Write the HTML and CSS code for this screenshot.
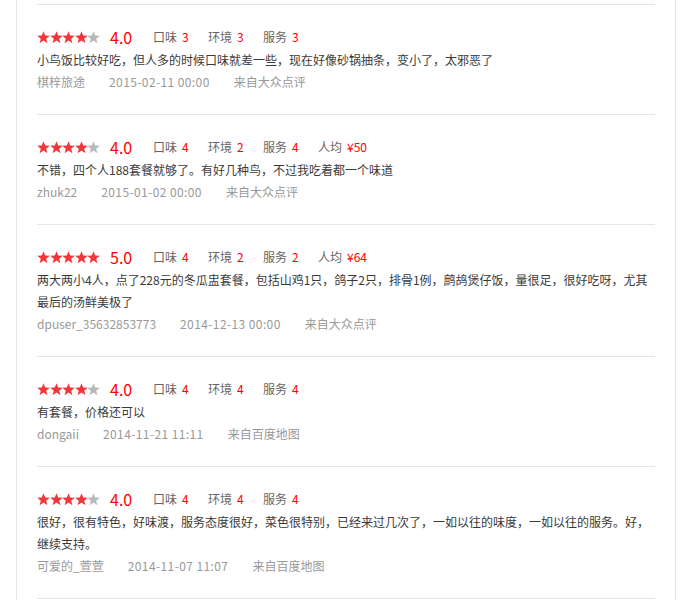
FILE: index.html
```html
<!DOCTYPE html>
<html lang="zh-CN">
<head>
  <meta charset="UTF-8" />
  <title>评论列表</title>
  <link rel="stylesheet" href="styles.css">
</head>
<body>
  <svg width="0" height="0" style="position:absolute">
    <defs>
      <polygon id="star" points="6.5,0.3 8.2,4.6 12.8,4.8 9.2,7.7 10.4,12.2 6.5,9.6 2.6,12.2 3.8,7.7 0.2,4.8 4.8,4.6" />
    </defs>
  </svg>

  <div class="panel">
    <ul class="reviews">
      <li class="review">
        <div class="rate">
          <span class="stars">
            <svg class="on"><use href="#star"/></svg><svg class="on"><use href="#star"/></svg><svg class="on"><use href="#star"/></svg><svg class="on"><use href="#star"/></svg><svg><use href="#star"/></svg>
          </span>
          <span class="score">4.0</span>
          <span class="item">口味<em>3</em></span>
          <span class="item">环境<em>3</em></span>
          <span class="item">服务<em>3</em></span>
        </div>
        <p class="text">小鸟饭比较好吃，但人多的时候口味就差一些，现在好像砂锅抽条，变小了，太邪恶了</p>
        <div class="meta"><span>棋梓旅途</span><span class="time">2015-02-11 00:00</span><span>来自大众点评</span></div>
      </li>

      <li class="review">
        <div class="rate">
          <span class="stars">
            <svg class="on"><use href="#star"/></svg><svg class="on"><use href="#star"/></svg><svg class="on"><use href="#star"/></svg><svg class="on"><use href="#star"/></svg><svg><use href="#star"/></svg>
          </span>
          <span class="score">4.0</span>
          <span class="item">口味<em>4</em></span>
          <span class="item">环境<em>2</em></span>
          <span class="item">服务<em>4</em></span>
          <span class="item">人均<em>¥50</em></span>
        </div>
        <p class="text">不错，四个人188套餐就够了。有好几种鸟，不过我吃着都一个味道</p>
        <div class="meta"><span>zhuk22</span><span class="time">2015-01-02 00:00</span><span>来自大众点评</span></div>
      </li>

      <li class="review">
        <div class="rate">
          <span class="stars">
            <svg class="on"><use href="#star"/></svg><svg class="on"><use href="#star"/></svg><svg class="on"><use href="#star"/></svg><svg class="on"><use href="#star"/></svg><svg class="on"><use href="#star"/></svg>
          </span>
          <span class="score">5.0</span>
          <span class="item">口味<em>4</em></span>
          <span class="item">环境<em>2</em></span>
          <span class="item">服务<em>2</em></span>
          <span class="item">人均<em>¥64</em></span>
        </div>
        <p class="text">两大两小4人，点了228元的冬瓜盅套餐，包括山鸡1只，鸽子2只，排骨1例，鹧鸪煲仔饭，量很足，很好吃呀，尤其最后的汤鲜美极了</p>
        <div class="meta"><span>dpuser_35632853773</span><span class="time">2014-12-13 00:00</span><span>来自大众点评</span></div>
      </li>

      <li class="review">
        <div class="rate">
          <span class="stars">
            <svg class="on"><use href="#star"/></svg><svg class="on"><use href="#star"/></svg><svg class="on"><use href="#star"/></svg><svg class="on"><use href="#star"/></svg><svg><use href="#star"/></svg>
          </span>
          <span class="score">4.0</span>
          <span class="item">口味<em>4</em></span>
          <span class="item">环境<em>4</em></span>
          <span class="item">服务<em>4</em></span>
        </div>
        <p class="text">有套餐，价格还可以</p>
        <div class="meta"><span>dongaii</span><span class="time">2014-11-21 11:11</span><span>来自百度地图</span></div>
      </li>

      <li class="review">
        <div class="rate">
          <span class="stars">
            <svg class="on"><use href="#star"/></svg><svg class="on"><use href="#star"/></svg><svg class="on"><use href="#star"/></svg><svg class="on"><use href="#star"/></svg><svg><use href="#star"/></svg>
          </span>
          <span class="score">4.0</span>
          <span class="item">口味<em>4</em></span>
          <span class="item">环境<em>4</em></span>
          <span class="item">服务<em>4</em></span>
        </div>
        <p class="text">很好，很有特色，好味渡，服务态度很好，菜色很特别，已经来过几次了，一如以往的味度，一如以往的服务。好，继续支持。</p>
        <div class="meta"><span>可爱的_萱萱</span><span class="time">2014-11-07 11:07</span><span>来自百度地图</span></div>
      </li>

      <li class="review">
        <div class="rate">
          <span class="stars">
            <svg class="on"><use href="#star"/></svg><svg class="on"><use href="#star"/></svg><svg class="on"><use href="#star"/></svg><svg class="on"><use href="#star"/></svg><svg><use href="#star"/></svg>
          </span>
          <span class="score">4.0</span>
          <span class="item">口味<em>4</em></span>
          <span class="item">环境<em>4</em></span>
          <span class="item">服务<em>4</em></span>
        </div>
        <p class="text">环境一般，味道还行</p>
        <div class="meta"><span>匿名用户</span><span class="time">2014-10-30 12:00</span><span>来自百度地图</span></div>
      </li>
    </ul>
  </div>
</body>
</html>
```

FILE: styles.css
```css
/* ── Base ─────────────────────────────────────────── */
*{box-sizing:border-box;margin:0;padding:0}
body{
  font-family:"Noto Sans CJK SC","Liberation Sans",sans-serif;
  font-size:12px;
  color:#333;
  background:#fff;
}

/* ── Panel with side rules ────────────────────────── */
.panel{
  margin-left:16px;
  width:660px;
  min-height:100vh;
  border-left:1px solid #e6e6e6;
  border-right:1px solid #e6e6e6;
  padding:4px 20px 0;
}
.reviews{list-style:none}

/* ── One review ───────────────────────────────────── */
.review{
  border-top:1px solid #e6e6e6;
  padding:20px 0 21px;
  line-height:22px;
}
.rate{display:flex;align-items:center;height:24px;white-space:nowrap}
.stars{display:flex;width:63px;flex-shrink:0}
.stars svg{width:13px;height:13px;margin-right:-0.4px;fill:#b8b8b8}
.stars svg.on{fill:#f2353a}
.score{color:#f00;font-size:16px;width:53px;padding-left:10px;flex-shrink:0}
.item{color:#666;min-width:55px;flex-shrink:0}
.item em{font-style:normal;color:#f00;margin-left:5px}

.text{color:#3a3a3a}
.meta{color:#999;display:flex;gap:24px}
.meta .time{letter-spacing:.4px}
```
